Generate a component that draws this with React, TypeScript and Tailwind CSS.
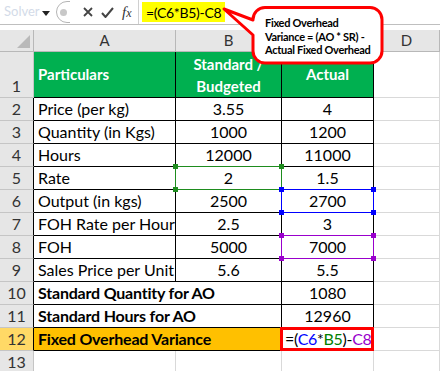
const font = "font-['Lato','Liberation_Sans',sans-serif]";

type Row = { n: number; a: string; b?: string; c: string; span?: boolean };

const rows: Row[] = [
  { n: 2, a: "Price (per kg)", b: "3.55", c: "4" },
  { n: 3, a: "Quantity (in Kgs)", b: "1000", c: "1200" },
  { n: 4, a: "Hours", b: "12000", c: "11000" },
  { n: 5, a: "Rate", b: "2", c: "1.5" },
  { n: 6, a: "Output (in kgs)", b: "2500", c: "2700" },
  { n: 7, a: "FOH Rate per Hour", b: "2.5", c: "3" },
  { n: 8, a: "FOH", b: "5000", c: "7000" },
  { n: 9, a: "Sales Price per Unit", b: "5.6", c: "5.5" },
  { n: 10, a: "Standard Quantity for AO", c: "1080", span: true },
  { n: 11, a: "Standard Hours for AO", c: "12960", span: true },
];

// coloured range outline with the little corner handles
function RangeBox({ line, dot }: { line: string; dot: string }) {
  return (
    <div className="absolute -left-px -top-px right-[-1px] bottom-[-1px] z-10 pointer-events-none">
      <div className={`absolute left-0 right-0 top-0 h-px ${dot}`} />
      <div className={`absolute left-0 right-0 bottom-0 h-px ${dot}`} />
      <div className={`absolute top-0 bottom-0 left-0 w-px ${dot}`} />
      <div className={`absolute top-0 bottom-0 right-0 w-px ${dot} ${line}`} />
      <div className={`absolute -left-[2px] -top-[2px] w-[5px] h-[5px] ${dot}`} />
      <div className={`absolute -right-[2px] -top-[2px] w-[5px] h-[5px] ${dot}`} />
      <div className={`absolute -left-[2px] -bottom-[2px] w-[5px] h-[5px] ${dot}`} />
      <div className={`absolute -right-[2px] -bottom-[2px] w-[5px] h-[5px] ${dot}`} />
    </div>
  );
}

function RowHead({ n, active, dark }: { n: number; active?: boolean; dark?: boolean }) {
  return (
    <div
      className={`flex items-end justify-center pb-[1px] text-[16px] leading-[20px] text-[#333] border-b border-[#c5c5c5] border-r ${
        dark ? "border-r-black" : "border-r-[#c5c5c5]"
      } ${active ? "bg-[#ffd966]" : "bg-[#e6e6e6]"}`}
    >
      {n}
    </div>
  );
}

function FormulaBar() {
  return (
    <div className="h-[25px] flex border-b border-[#bfbfbf] bg-white">
      <div className="w-[56px] relative flex items-center">
        <span className="pl-[4px] text-[13px] text-[#d3dbe8]">Solver</span>
        <svg className="absolute left-[42px] top-[11px]" width="8" height="5" viewBox="0 0 8 5">
          <path d="M0 0h8L4 5z" fill="#222" />
        </svg>
      </div>
      <svg width="16" height="25" viewBox="0 0 16 25">
        <path d="M14 1.5H11a10 10 0 0 0 0 21h3" fill="none" stroke="#b5b5b5" strokeWidth="1" />
        <circle cx="7.5" cy="12.5" r="3.5" fill="#c8c8c8" />
      </svg>
      <div className="flex items-center w-[66px] pl-[11px] gap-[8px]">
        <svg width="10" height="10" viewBox="0 0 10 10">
          <path d="M1 1l8 8M9 1L1 9" stroke="#444" strokeWidth="1.8" />
        </svg>
        <svg width="13" height="11" viewBox="0 0 13 11">
          <path d="M1 6l3.5 4L12 1" fill="none" stroke="#444" strokeWidth="2" />
        </svg>
        <span className="font-['Liberation_Serif',serif] italic text-[15px] text-[#333] leading-none">
          f<span className="text-[12px]">x</span>
        </span>
      </div>
      <div className="flex-1 flex items-stretch border-l border-[#d0d0d0] py-[2px] pl-[3px]">
        <span className="bg-[#ffff00] px-[4px] text-[14px] tracking-[-0.3px] leading-[21px] text-black whitespace-nowrap">
          =(C6*B5)-C8
        </span>
      </div>
    </div>
  );
}

function Callout() {
  return (
    <div className="absolute left-[215px] top-0 w-[175px] h-[70px] z-20 pointer-events-none">
      <svg width="175" height="70" viewBox="0 0 175 70" className="absolute inset-0">
        <path
          d="M50 7.5H155a12 12 0 0 1 12 12V51a12 12 0 0 1-12 12H50a12 12 0 0 1-12-12V35L9 9 38 20v-0.5a12 12 0 0 1 12-12z"
          fill="white"
          stroke="#ff0000"
          strokeWidth="3"
          strokeLinejoin="round"
        />
      </svg>
      <div className="absolute left-[50px] top-[16px] text-[11px] leading-[13.5px] font-bold tracking-[-0.3px] text-black whitespace-nowrap">
        <div>Fixed Overhead</div>
        <div>Variance = (AO * SR) -</div>
        <div>Actual Fixed Overhead</div>
      </div>
    </div>
  );
}

export default function App() {
  const cell = "flex items-end pb-[1px] text-[16px] leading-[20px] text-black border-r border-b border-black";
  const boldCell = "col-span-2 pl-[4px] font-bold text-[14px] tracking-[-0.2px]";
  const head = "bg-[#00b050] border-r border-b border-black text-white font-bold text-[15px]";
  return (
    <div className={`relative w-[440px] h-[371px] overflow-hidden bg-white ${font}`}>
      <FormulaBar />
      <div className="h-[5px]" />
      <div className="grid grid-cols-[34px_142px_106px_92px_1fr] grid-rows-[22px_46px_repeat(12,23px)]">
        {/* column headers */}
        <div className="relative bg-[#e6e6e6] border-r border-b border-[#b8b8b8]">
          <svg className="absolute right-[3px] bottom-[3px]" width="13" height="13" viewBox="0 0 13 13">
            <path d="M13 0v13H0z" fill="#b9b9b9" />
          </svg>
        </div>
        {["A", "B", "C", "D"].map((l) => (
          <div
            key={l}
            className="flex items-center justify-center bg-[#e6e6e6] border-r border-b border-[#b8b8b8] text-[15px] text-[#333]"
          >
            {l}
          </div>
        ))}

        {/* row 1 */}
        <RowHead n={1} />
        <div className={`flex items-center pl-[4px] ${head}`}>Particulars</div>
        <div className={`flex flex-col items-center justify-center leading-[22px] ${head}`}>
          <span>Standard /</span>
          <span>Budgeted</span>
        </div>
        <div className={`flex items-center justify-center ${head}`}>Actual</div>
        <div className="border-r border-b border-[#d9d9d9]" />

        {rows.map((r) => (
          <div key={r.n} className="contents">
            <RowHead n={r.n} dark />
            {r.span ? (
              <div className={`${cell} ${boldCell}`}>{r.a}</div>
            ) : (
              <>
                <div className={`${cell} pl-[4px]`}>{r.a}</div>
                <div className={`${cell} justify-center relative`}>
                  {r.b}
                  {r.n === 5 && <RangeBox line="border-[#1e8c1e]" dot="bg-[#1e8c1e]" />}
                </div>
              </>
            )}
            <div className={`${cell} justify-center relative`}>
              {r.c}
              {r.n === 6 && <RangeBox line="border-[#0000ff]" dot="bg-[#0000ff]" />}
              {r.n === 8 && <RangeBox line="border-[#9900cc]" dot="bg-[#9900cc]" />}
            </div>
            <div className="border-r border-b border-[#d9d9d9]" />
          </div>
        ))}

        {/* row 12 */}
        <RowHead n={12} active dark />
        <div className={`${cell} ${boldCell} bg-[#ffc000]`}>Fixed Overhead Variance</div>
        <div className={`${cell} relative pl-[3px] text-[15px] tracking-[-0.3px] whitespace-nowrap`}>
          <span>
            =(<span className="text-[#0000ff]">C6</span>*<span className="text-[#008000]">B5</span>)-<span className="text-[#9900cc]">C8</span>
          </span>
          <span className="ml-[1px] mb-[1px] w-px h-[18px] bg-black" />
          <div className="absolute -left-[2px] -top-px right-[-1px] bottom-[-1px] z-10 border-[3px] border-[#ff0000]" />
        </div>
        <div className="border-r border-b border-[#d9d9d9]" />

        {/* row 13 */}
        <RowHead n={13} />
        <div className="border-r border-b border-[#d9d9d9]" />
        <div className="border-r border-b border-[#d9d9d9]" />
        <div className="border-r border-b border-[#d9d9d9]" />
        <div className="border-r border-b border-[#d9d9d9]" />
      </div>
      <Callout />
    </div>
  );
}
